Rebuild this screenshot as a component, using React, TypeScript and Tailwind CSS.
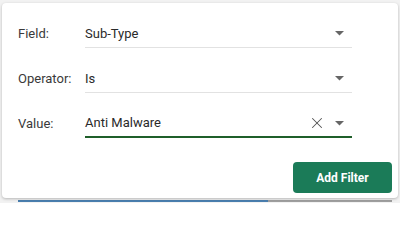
import { X } from 'lucide-react';

type RowProps = {
  label: string;
  value: string;
  active?: boolean;
  clearable?: boolean;
};

function Caret() {
  return (
    <svg width="9" height="5" viewBox="0 0 9 5" className="shrink-0">
      <path d="M0 0 L9 0 L4.5 4.5 Z" fill="#666666" />
    </svg>
  );
}

function FilterRow({ label, value, active, clearable }: RowProps) {
  return (
    <div className="flex items-center h-[28px]">
      <div className="w-[67px] text-[13px] text-[#3a3a3a]">{label}</div>
      <div
        className={
          active
            ? 'flex items-center w-[267px] h-[28px] border-b-2 border-[#1f5f2a]'
            : 'flex items-center w-[267px] h-[28px] border-b border-[#e2e2e2]'
        }
      >
        <span className="flex-1 text-[13px] text-[#2a2a2a]">{value}</span>
        {clearable && (
          <X size={18} strokeWidth={1.4} className="text-[#555] mr-[9px]" />
        )}
        <div className="mr-[8px]">
          <Caret />
        </div>
      </div>
    </div>
  );
}

export default function App() {
  return (
    <div
      className="relative w-[400px] h-[203px] bg-[#f2f2f2] overflow-hidden"
      style={{ fontFamily: 'Roboto, "Noto Sans", sans-serif' }}
    >
      <div className="absolute left-[18px] top-[200px] w-[250px] h-[2px] bg-[#4a7fb0]" />
      <div className="absolute left-[268px] top-[200px] w-[124px] h-[2px] bg-[#a0a0a0]" />
      <div className="relative ml-[2px] mt-[3px] w-[396px] h-[195px] bg-white rounded-[4px] shadow-[0_1px_3px_rgba(0,0,0,0.25)]">
        <div className="flex flex-col gap-[17px] pl-[16px] pt-[17px]">
          <FilterRow label="Field:" value="Sub-Type" />
          <FilterRow label="Operator:" value="Is" />
          <FilterRow label="Value:" value="Anti Malware" active clearable />
        </div>
        <div className="flex justify-end pr-[6px] mt-[24px]">
          <button
            type="button"
            className="w-[99px] h-[31px] rounded-[4px] bg-[#1b7b58] text-white text-[12px] font-bold"
          >
            Add Filter
          </button>
        </div>
      </div>
    </div>
  );
}
